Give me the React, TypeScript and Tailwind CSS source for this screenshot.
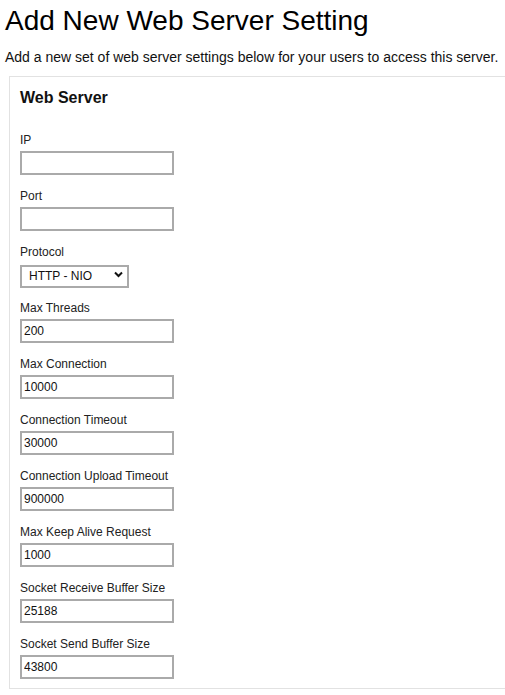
import React from "react";

const fields: { label: string; value?: string; select?: boolean }[] = [
  { label: "IP", value: "" },
  { label: "Port", value: "" },
  { label: "Protocol", select: true },
  { label: "Max Threads", value: "200" },
  { label: "Max Connection", value: "10000" },
  { label: "Connection Timeout", value: "30000" },
  { label: "Connection Upload Timeout", value: "900000" },
  { label: "Max Keep Alive Request", value: "1000" },
  { label: "Socket Receive Buffer Size", value: "25188" },
  { label: "Socket Send Buffer Size", value: "43800" },
];

export default function App() {
  return (
    <div
      className="min-h-[695px] bg-white text-black pl-[5px] pt-[5px] overflow-hidden"
      style={{ fontFamily: '"Liberation Sans", Arial, sans-serif' }}
    >
      <h1 className="text-[28px] leading-[32px] font-normal text-black">
        Add New Web Server Setting
      </h1>
      <p className="mt-[12px] text-[14px] leading-[16px] text-[#111]">
        Add a new set of web server settings below for your users to access this server.
      </p>
      <div className="mt-[11px] ml-[4px] border-l border-t border-b border-[#e2e2e2] pl-[10px] pt-[11px] pb-[9px]">
        <h2 className="text-[16px] leading-[20px] font-bold text-[#111]">Web Server</h2>
        <div className="mt-[25px] flex flex-col gap-[14px]">
          {fields.map((f) => (
            <div key={f.label} className="flex flex-col gap-[4px]">
              <label className="text-[12px] leading-[14px] text-[#222]">{f.label}</label>
              {f.select ? (
                <div className="relative w-[109px] h-[24px]">
                  <select
                    defaultValue="nio"
                    className="appearance-none w-full h-[23px] border-2 border-[#aaaaaa] bg-white pl-[7px] text-[12px] text-[#111] outline-none"
                    style={{ fontFamily: '"Liberation Sans", Arial, sans-serif' }}
                  >
                    <option value="nio">HTTP - NIO</option>
                  </select>
                  <svg
                    className="absolute right-[6px] top-[8px] pointer-events-none"
                    width="9"
                    height="7"
                    viewBox="0 0 9 7"
                  >
                    <path d="M1 1.5 L4.5 5 L8 1.5" fill="none" stroke="#111" strokeWidth="2" />
                  </svg>
                </div>
              ) : (
                <input
                  type="text"
                  defaultValue={f.value}
                  className="w-[154px] h-[24px] border-2 border-[#aaaaaa] bg-white px-[2px] text-[12px] text-[#111] outline-none"
                  style={{ fontFamily: '"Liberation Sans", Arial, sans-serif' }}
                />
              )}
            </div>
          ))}
        </div>
      </div>
    </div>
  );
}
